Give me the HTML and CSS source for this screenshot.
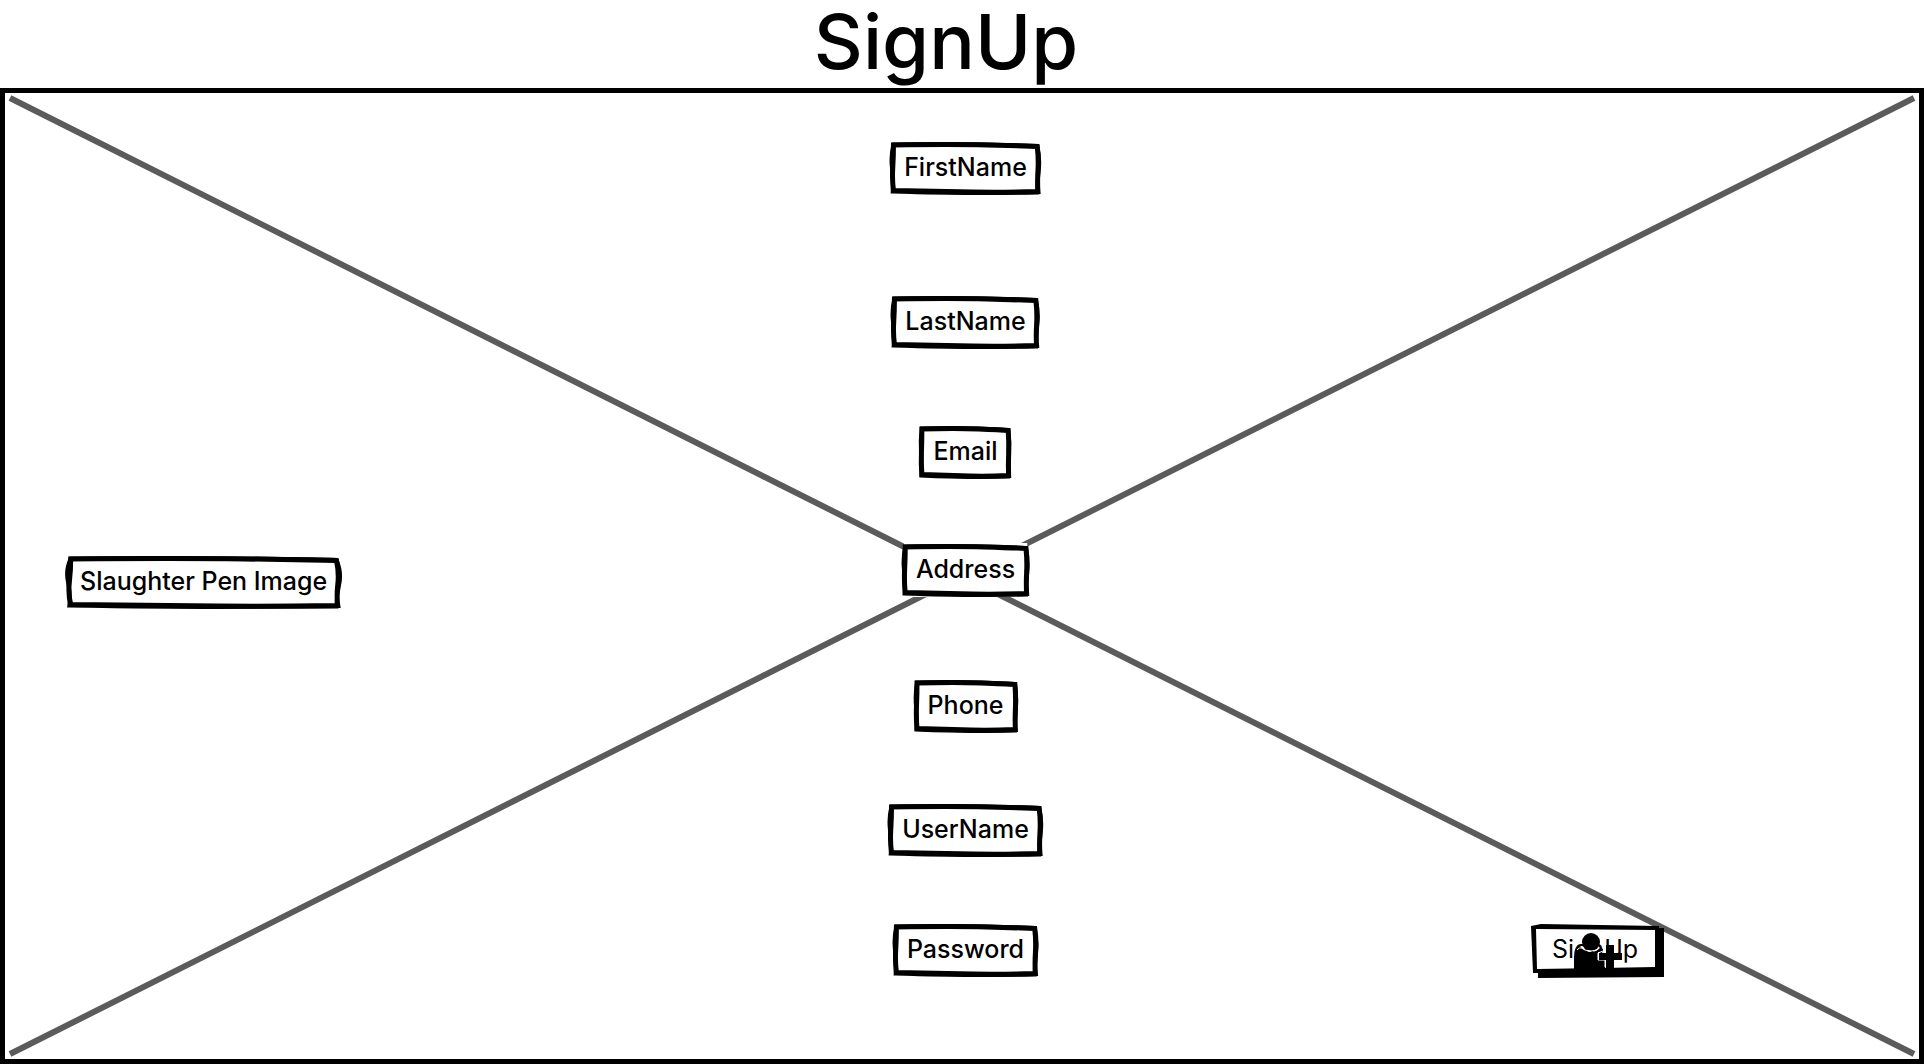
FILE: index.html
```
<!DOCTYPE html>
<html lang="en">
<head>
<meta charset="utf-8">
<meta name="viewport" content="width=device-width, initial-scale=1">
<title>SignUp</title>
<link rel="stylesheet" href="styles.css">
</head>
<body>
<svg width="0" height="0" class="defs" aria-hidden="true">
  <symbol id="sketch" viewBox="0 0 100 100" preserveAspectRatio="none">
    <path class="sketch-fill" d="M0-6H100V106H0Z"/>
    <path class="sketch-line" d="M1 2Q40 0 65 2T99 5Q100 30 99.500 55T99.500 99Q75 101 55 100T1 97Q0 75 .5 50T1 2Z"/>
    <path class="sketch-line thin" d="M1 1Q35-1 65 1T99 4Q101 30 100 55T99 101Q75 102 55 102T.5 99Q1 75 0 50T1 1Z"/>
  </symbol>
</svg>
<header class="header"><h1>SignUp</h1></header>
<main class="frame">
  <svg class="cross" viewBox="0 0 100 100" preserveAspectRatio="none" aria-hidden="true">
    <path d="M0 0L100 100M100 0L0 100"/>
  </svg>
  <div class="side">
    <p class="box"><svg aria-hidden="true"><use href="#sketch"/></svg><span>Slaughter Pen Image</span></p>
  </div>
  <ul class="fields">
    <li class="box"><svg aria-hidden="true"><use href="#sketch"/></svg><span>FirstName</span></li>
    <li class="box"><svg aria-hidden="true"><use href="#sketch"/></svg><span>LastName</span></li>
    <li class="box"><svg aria-hidden="true"><use href="#sketch"/></svg><span>Email</span></li>
    <li class="box"><svg aria-hidden="true"><use href="#sketch"/></svg><span>Address</span></li>
    <li class="box"><svg aria-hidden="true"><use href="#sketch"/></svg><span>Phone</span></li>
    <li class="box"><svg aria-hidden="true"><use href="#sketch"/></svg><span>UserName</span></li>
    <li class="box"><svg aria-hidden="true"><use href="#sketch"/></svg><span>Password</span></li>
  </ul>
  <div class="actions">
    <button class="signup" type="button">
      <svg class="plate" viewBox="0 0 134 54" aria-hidden="true">
        <path d="M7 7L133 4V53L7 54Z"/>
        <path d="M0 2L10 0L128 2V49L2 49Z"/>
        <path class="face" d="M5 5L124 6V43L70 44L6 45Z"/>
      </svg>
      <span>SignUp</span>
      <svg class="user-plus" viewBox="0 0 50 38" aria-hidden="true">
        <path d="M0 37V25Q0 14 6 14Q10 20 17 20Q22 20 26 16L29 17V20H24V28H31V37Z"/>
        <circle cx="17" cy="10" r="9"/>
        <path class="rim" d="M3 18Q5 15 8 16Q11 19 17 19Q23 19 25 16"/>
        <path class="rim" d="M29 19L24 21V28H31V35"/>
        <path d="M32 13H40V21H48V28H40V37H32V28H25V21H32Z"/>
      </svg>
    </button>
  </div>
</main>
</body>
</html>
```
FILE: styles.css
```
* { box-sizing: border-box; }

body {
  display: flex;
  flex-direction: column;
  min-height: 100vh;
  margin: 0;
  background: #fff;
  color: #000;
  font-family: Inter, "Liberation Sans", sans-serif;
}

.defs { position: absolute; }

.header {
  padding: 0 32px 6px 0;
  text-align: center;
}

h1 {
  margin: 0;
  font-size: 76px;
  font-weight: 500;
  line-height: 82px;
}

.frame {
  position: relative;
  display: grid;
  grid-template-columns: 1fr auto 1fr;
  flex: 1;
  padding-left: 7px;
  border: 5px solid #000;
}

.cross {
  position: absolute;
  top: 5px;
  left: 5px;
  width: calc(100% - 10px);
  height: calc(100% - 10px);
  overflow: visible;
}

.cross path {
  fill: none;
  stroke: #5b5b5b;
  stroke-width: 6px;
  vector-effect: non-scaling-stroke;
}

.side {
  padding: 465px 0 0 56px;
}

.fields {
  display: grid;
  grid-template-rows: 154px 130px 118px 136px 124px 120px auto;
  align-content: start;
  justify-items: center;
  margin: 0;
  padding: 51px 0;
  list-style: none;
}

.box {
  position: relative;
  width: max-content;
  height: 48px;
  margin: 0;
  padding: 0 12px;
  font-size: 25px;
  font-weight: 450;
  line-height: 46px;
}

.box svg {
  position: absolute;
  inset: 0;
  width: 100%;
  height: 100%;
  overflow: visible;
}

.box span { position: relative; }

#sketch { overflow: visible; }

.sketch-fill { fill: #fff; }

.sketch-line {
  fill: none;
  stroke: #000;
  stroke-width: 5px;
  vector-effect: non-scaling-stroke;
}

.sketch-line.thin { stroke-width: 4px; }

.actions {
  display: flex;
  align-items: flex-start;
  justify-content: flex-end;
  padding: 831px 254px 0 0;
}

.signup {
  position: relative;
  width: 134px;
  height: 54px;
  padding: 0 6px 4px 0;
  border: 0;
  background: none;
  color: #000;
  font: inherit;
  font-size: 25px;
  line-height: 48px;
}

.signup span { position: relative; }

.plate {
  position: absolute;
  inset: 0;
  width: 134px;
  height: 54px;
}

.plate .face { fill: #fff; }

.user-plus {
  position: absolute;
  top: 8px;
  left: 43px;
  width: 50px;
  height: 38px;
}

.user-plus .rim {
  fill: none;
  stroke: #fff;
  stroke-width: 1px;
}
```
